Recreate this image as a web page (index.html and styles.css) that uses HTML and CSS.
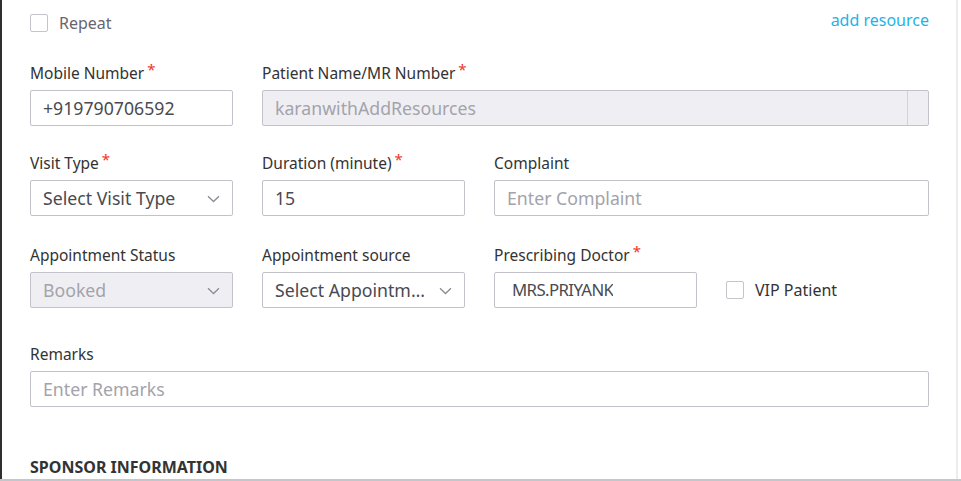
FILE: index.html
```html
<!DOCTYPE html>
<html>
<head>
<meta charset="utf-8">
<link rel="stylesheet" href="styles.css">
</head>
<body>
<div class="frame">
  <div class="panel">
    <div class="topbar">
      <label class="check"><span class="box"></span><span class="check-text">Repeat</span></label>
      <a class="link">add resource</a>
    </div>

    <div class="grid row1">
      <div class="field">
        <div class="label">Mobile Number<span class="req">*</span></div>
        <div class="input"><span class="value">+919790706592</span></div>
      </div>
      <div class="field span3">
        <div class="label">Patient Name/MR Number<span class="req">*</span></div>
        <div class="input disabled split"><span class="value muted grow">karanwithAddResources</span><span class="addon"></span></div>
      </div>
    </div>

    <div class="grid row2">
      <div class="field">
        <div class="label">Visit Type<span class="req">*</span></div>
        <div class="input select"><span class="value">Select Visit Type</span><svg class="chev" width="13" height="8" viewBox="0 0 13 8"><path d="M1 1.2 L6.5 6.5 L12 1.2" fill="none" stroke="#8c8c94" stroke-width="1.3"/></svg></div>
      </div>
      <div class="field">
        <div class="label">Duration (minute)<span class="req">*</span></div>
        <div class="input"><span class="value">15</span></div>
      </div>
      <div class="field span2">
        <div class="label">Complaint</div>
        <div class="input"><span class="value placeholder">Enter Complaint</span></div>
      </div>
    </div>

    <div class="grid row3">
      <div class="field">
        <div class="label">Appointment Status</div>
        <div class="input select disabled"><span class="value muted">Booked</span><svg class="chev" width="13" height="8" viewBox="0 0 13 8"><path d="M1 1.2 L6.5 6.5 L12 1.2" fill="none" stroke="#8c8c94" stroke-width="1.3"/></svg></div>
      </div>
      <div class="field">
        <div class="label">Appointment source</div>
        <div class="input select"><span class="value ellipsis">Select Appointment source</span><svg class="chev" width="13" height="8" viewBox="0 0 13 8"><path d="M1 1.2 L6.5 6.5 L12 1.2" fill="none" stroke="#8c8c94" stroke-width="1.3"/></svg></div>
      </div>
      <div class="field">
        <div class="label">Prescribing Doctor<span class="req">*</span></div>
        <div class="input doctor"><span class="value clip">MRS.PRIYANKA SHARMA</span></div>
      </div>
      <div class="field vip">
        <label class="check"><span class="box"></span><span class="check-text dark">VIP Patient</span></label>
      </div>
    </div>

    <div class="grid row4">
      <div class="field span4">
        <div class="label">Remarks</div>
        <div class="input"><span class="value placeholder">Enter Remarks</span></div>
      </div>
    </div>

    <div class="section-title">SPONSOR INFORMATION</div>
  </div>
</div>
<div class="bottom-line"></div>
</body>
</html>
```

FILE: styles.css
```css
* { box-sizing: border-box; }
html, body { margin: 0; padding: 0; background: #fff; }
body {
  font-family: "Noto Sans", "Open Sans", Arial, sans-serif;
  color: #333;
  width: 961px;
  height: 481px;
  overflow: hidden;
}
.frame {
  height: 479px;
  border-left: 2px solid #2f2f2f;
  display: flex;
}
.panel {
  width: 956px;
  height: 479px;
  border-right: 2px solid #ececef;
  padding: 0 27px 0 28px;
  overflow: hidden;
}
.bottom-line {
  height: 2px;
  background: #c5c5cc;
}
.topbar {
  display: flex;
  justify-content: space-between;
  align-items: flex-start;
  height: 63px;
  padding-top: 12px;
}
.check {
  display: flex;
  align-items: center;
  gap: 11px;
  white-space: nowrap;
}
.box {
  flex: none;
  width: 18px;
  height: 18px;
  border: 1px solid #c4c4cc;
  border-radius: 2px;
  background: #fff;
}
.check-text {
  font-size: 16px;
  color: #66666c;
  line-height: 22px;
}
.check-text.dark { color: #333; }
.link {
  font-size: 16px;
  color: #1fb3e6;
  line-height: 20px;
  margin-top: -2px;
}
.grid {
  display: grid;
  grid-template-columns: repeat(4, minmax(0, 1fr));
  column-gap: 29px;
}
.span2 { grid-column: span 2; }
.span3 { grid-column: span 3; }
.span4 { grid-column: span 4; }
.row2 { margin-top: 27px; }
.row3 { margin-top: 29px; }
.row4 { margin-top: 36px; }
.label {
  font-size: 15.5px;
  line-height: 20px;
  color: #333;
  margin-bottom: 7px;
  white-space: nowrap;
}
.req {
  color: #f5331f;
  font-size: 15px;
  position: relative;
  top: -4px;
  margin-left: 3px;
}
.input {
  height: 36px;
  border: 1px solid #c2c2ca;
  border-radius: 2px;
  background: #fff;
  display: flex;
  align-items: center;
  padding: 0 12px;
  font-size: 17.7px;
  color: #4a4a50;
  overflow: hidden;
}
.input.disabled { background: #efeff3; }
.value { white-space: nowrap; line-height: 22px; }
.value.muted { color: #a3a3ab; }
.placeholder { color: #a3a3ab; }
.grow { flex: 1; }
.split { padding-right: 0; }
.addon {
  width: 21px;
  align-self: stretch;
  border-left: 1px solid #d2d2d8;
}
.select { justify-content: space-between; padding-right: 12px; }
.ellipsis {
  overflow: hidden;
  text-overflow: ellipsis;
  min-width: 0;
  flex: 1;
  margin-right: 10px;
}
.chev { flex: none; margin-top: 2px; }
.doctor { padding: 0 83px 0 17px; color: #4a4a50; }
.clip {
  overflow: hidden;
  display: block;
  width: 100%;
  font-size: 16.8px;
  letter-spacing: -0.6px;
}
.vip {
  display: flex;
  align-items: flex-end;
  padding-bottom: 7px;
}
.section-title {
  margin-top: 50px;
  font-size: 16px;
  font-weight: 700;
  color: #333;
  line-height: 20px;
}
```
